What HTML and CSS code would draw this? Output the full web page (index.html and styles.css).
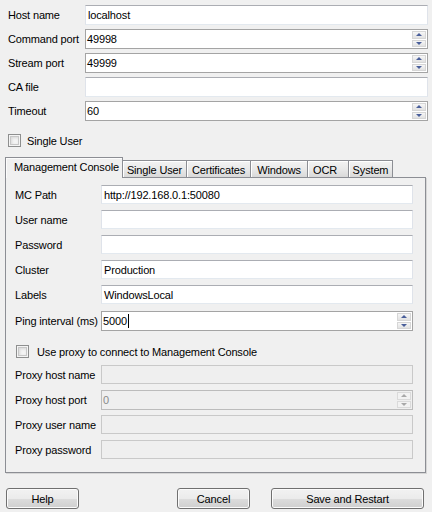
FILE: index.html
```html
<!DOCTYPE html>
<html>
<head>
<meta charset="utf-8">
<link rel="stylesheet" href="styles.css">
</head>
<body>
<div class="window">
  <div class="form-grid">
    <div class="lbl">Host name</div>
    <div class="tb">localhost</div>
    <div class="lbl">Command port</div>
    <div class="nud"><span class="nud-text">49998</span><span class="spin"><span class="sb"><i class="up"></i></span><span class="sb"><i class="down"></i></span></span></div>
    <div class="lbl">Stream port</div>
    <div class="nud"><span class="nud-text">49999</span><span class="spin"><span class="sb"><i class="up"></i></span><span class="sb"><i class="down"></i></span></span></div>
    <div class="lbl">CA file</div>
    <div class="tb"></div>
    <div class="lbl">Timeout</div>
    <div class="nud"><span class="nud-text">60</span><span class="spin"><span class="sb"><i class="up"></i></span><span class="sb"><i class="down"></i></span></span></div>
  </div>

  <div class="check-row top-check">
    <span class="cbox"></span><span class="cbox-label">Single User</span>
  </div>

  <div class="tabs">
    <div class="tab active tab-mc">Management Console</div>
    <div class="tab tab-su">Single User</div>
    <div class="tab tab-cert">Certificates</div>
    <div class="tab tab-win">Windows</div>
    <div class="tab tab-ocr">OCR</div>
    <div class="tab tab-sys">System</div>
  </div>

  <div class="panel">
    <div class="prow"><div class="lbl">MC Path</div><div class="tb">http://192.168.0.1:50080</div></div>
    <div class="prow"><div class="lbl">User name</div><div class="tb"></div></div>
    <div class="prow"><div class="lbl">Password</div><div class="tb"></div></div>
    <div class="prow"><div class="lbl">Cluster</div><div class="tb">Production</div></div>
    <div class="prow"><div class="lbl">Labels</div><div class="tb">WindowsLocal</div></div>
    <div class="prow ping"><div class="lbl">Ping interval (ms)</div><div class="nud"><span class="nud-text">5000<span class="caret"></span></span><span class="spin"><span class="sb"><i class="up"></i></span><span class="sb"><i class="down"></i></span></span></div></div>
    <div class="check-row proxy-check">
      <span class="cbox"></span><span class="cbox-label proxy-label">Use proxy to connect to Management Console</span>
    </div>
    <div class="prow first-proxy"><div class="lbl">Proxy host name</div><div class="tb disabled"></div></div>
    <div class="prow"><div class="lbl">Proxy host port</div><div class="nud disabled"><span class="nud-text">0</span><span class="spin"><span class="sb"><i class="up"></i></span><span class="sb"><i class="down"></i></span></span></div></div>
    <div class="prow"><div class="lbl">Proxy user name</div><div class="tb disabled"></div></div>
    <div class="prow"><div class="lbl">Proxy password</div><div class="tb disabled"></div></div>
  </div>

  <div class="buttons">
    <div class="btn btn-help">Help</div>
    <div class="btn btn-cancel">Cancel</div>
    <div class="btn btn-save">Save and Restart</div>
  </div>
</div>
</body>
</html>
```
FILE: styles.css
```css
* { box-sizing: border-box; }
html, body {
  margin: 0;
  padding: 0;
  background: #f0f0f0;
}
body {
  font-family: "Liberation Sans", Arial, sans-serif;
  font-size: 11px;
  letter-spacing: -0.15px;
  color: #000;
}
.window {
  width: 432px;
  height: 512px;
  overflow: hidden;
}
.form-grid {
  display: grid;
  grid-template-columns: 77px 343px;
  grid-auto-rows: 20px;
  row-gap: 4px;
  padding: 5px 0 0 8px;
}
.lbl {
  display: flex;
  align-items: center;
  white-space: nowrap;
}
.tb {
  height: 20px;
  background: #fff;
  border: 1px solid #dfe3ea;
  border-top-color: #abadb3;
  border-bottom-color: #e3e9ef;
  padding-left: 2px;
  display: flex;
  align-items: center;
  white-space: nowrap;
}
.prow .tb { height: 19px; }
.tb.disabled {
  background: #efefef;
  border-color: #c9c9c9;
}
.nud {
  height: 20px;
  background: #fff;
  border: 1px solid #a4a4a4;
  display: flex;
  align-items: stretch;
}
.nud.disabled {
  background: #efefef;
  border-color: #bcbcbc;
  color: #8a8a8a;
}
.nud-text {
  flex: 1;
  display: flex;
  align-items: center;
  padding-left: 1px;
}
.caret {
  display: inline-block;
  width: 1px;
  height: 14px;
  background: #000;
  margin-left: 1px;
}
.spin {
  width: 14px;
  margin: 1px 1px 1px 0;
  display: flex;
  flex-direction: column;
  gap: 1px;
}
.sb {
  flex: 1;
  display: flex;
  align-items: center;
  justify-content: center;
  background: linear-gradient(#f6f6f6, #e2e2e2);
  border: 1px solid #d6d6d6;
}
.sb i {
  width: 0;
  height: 0;
  border-left: 3px solid transparent;
  border-right: 3px solid transparent;
}
.sb .up { border-bottom: 3px solid #4a5f9a; }
.sb .down { border-top: 3px solid #4a5f9a; }
.nud.disabled .sb { background: #f2f2f2; border-color: #dadada; }
.nud.disabled .sb .up { border-bottom-color: #a8a8a8; }
.nud.disabled .sb .down { border-top-color: #a8a8a8; }

.check-row {
  display: flex;
  align-items: center;
  height: 13px;
}
.top-check {
  margin-top: 13px;
  padding-left: 8px;
}
.cbox {
  width: 13px;
  height: 13px;
  border: 1px solid #8e8f8f;
  background: #f4f4f4;
  box-shadow: inset 0 0 0 1px #f4f4f4, inset 0 0 0 2px #c7c7c7, inset 1px 1px 3px 2px #d8d8d8;
  flex: none;
}
.cbox-label {
  margin-left: 6px;
  white-space: nowrap;
}
.proxy-label { margin-left: 8px; }

.tabs {
  display: flex;
  align-items: flex-end;
  margin: 10px 0 0 5px;
  height: 20px;
  position: relative;
  z-index: 1;
}
.tab {
  height: 17px;
  border: 1px solid #8c8e94;
  border-bottom: none;
  border-left: none;
  background: linear-gradient(#f3f3f3, #e9e9e9 50%, #d9d9d9);
  display: flex;
  align-items: center;
  justify-content: center;
  white-space: nowrap;
  padding-top: 1px;
  box-shadow: inset 1px 1px 0 #fff;
}
.tab.active {
  height: 21px;
  margin-bottom: -1px;
  background: #f0f0f0;
  border-left: 1px solid #8c8e94;
  justify-content: flex-start;
  padding: 0 0 2px 8px;
  box-shadow: inset 1px 1px 0 #fcfcfc;
}
.tab-mc { width: 118px; }
.tab-su { width: 64px; }
.tab-cert { width: 64px; }
.tab-win { width: 57px; }
.tab-ocr { width: 41px; justify-content: flex-start; padding-left: 5px; }
.tab-sys { width: 44px; }

.panel {
  margin-left: 5px;
  width: 421px;
  height: 296px;
  border: 1px solid #8c8e94;
  box-shadow: 1px 1px 0 #d6d6d6;
  padding: 7px 12px 0 9px;
  display: flex;
  flex-direction: column;
  gap: 5px;
}
.prow {
  display: grid;
  grid-template-columns: 86px 312px;
  align-items: start;
  height: 20px;
}
.prow .lbl { height: 19px; }
.prow.ping { margin-top: 1px; }
.proxy-check {
  margin-top: 9px;
  padding-left: 1px;
}
.first-proxy { margin-top: 2px; }

.buttons {
  display: flex;
  margin-top: 15px;
  padding-left: 6px;
}
.btn {
  height: 21px;
  border: 1px solid #707070;
  border-radius: 3px;
  background: linear-gradient(#f2f2f2, #ebebeb 50%, #dddddd 50%, #cfcfcf);
  box-shadow: inset 0 0 0 1px #fbfbfb;
  display: flex;
  align-items: center;
  justify-content: center;
  white-space: nowrap;
}
.btn-help { width: 73px; }
.btn-cancel { width: 73px; margin-left: 98px; }
.btn-save { width: 153px; margin-left: 21px; }
```
